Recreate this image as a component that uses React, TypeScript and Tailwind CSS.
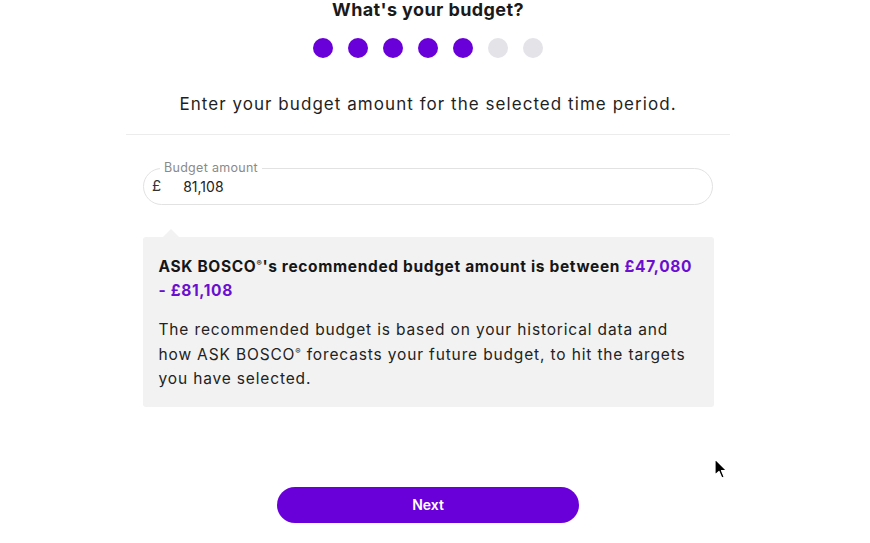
const steps = [true, true, true, true, true, false, false];

function Cursor() {
  return (
    <svg
      className="absolute left-[714px] top-[458px]"
      width="14"
      height="22"
      viewBox="0 0 14 22"
    >
      <path
        d="M1 1 L1 17 L5 13.5 L7.8 20 L10.2 19 L7.5 12.6 L12.5 12.6 Z"
        fill="#000"
        stroke="#fff"
        strokeWidth="1.2"
        strokeLinejoin="round"
      />
    </svg>
  );
}

function Reg() {
  return <span className="align-super text-[8px] leading-none">®</span>;
}

export default function App() {
  return (
    <div className="relative w-[870px] h-[543px] bg-white overflow-hidden font-['Inter',sans-serif] text-[#1a1a1a]">
      <div className="w-[856px] flex flex-col items-center">
        <h1 className="mt-[-1px] text-[18px] leading-[22px] font-bold tracking-[0.4px]">
          What's your budget?
        </h1>

        <div className="mt-[17px] flex gap-[15px]">
          {steps.map((done, i) => (
            <span
              key={i}
              className={
                done
                  ? 'w-[20px] h-[20px] rounded-full bg-[#6a00d9]'
                  : 'w-[20px] h-[20px] rounded-full bg-[#e3e3e8]'
              }
            />
          ))}
        </div>

        <p className="mt-[32px] text-[17px] leading-[28px] tracking-[1.05px] text-[#1f1f1f]">
          Enter your budget amount for the selected time period.
        </p>

        <div className="mt-[16px] w-[604px] h-px bg-[#ececec]" />

        {/* budget input with notched label */}
        <div className="relative mt-[33px] w-[570px] h-[37px] rounded-full border border-[#e2e2e2] flex items-center pl-[8px]">
          <span className="absolute left-[16px] top-[-9px] px-[4px] bg-white text-[12.5px] leading-[16px] tracking-[0.3px] text-[#8a8a8a]">
            Budget amount
          </span>
          <span className="text-[15px] text-[#333]">£</span>
          <span className="ml-[22px] text-[14px] text-[#222]">81,108</span>
        </div>

        {/* recommendation box */}
        <div className="relative mt-[32px] w-[571px] bg-[#f2f2f2] rounded-[3px] px-[16px] pt-[18px] pb-[15px]">
          <span className="absolute left-[20px] top-[-8px] w-0 h-0 border-l-[8px] border-r-[8px] border-b-[8px] border-l-transparent border-r-transparent border-b-[#f2f2f2]" />
          <p className="text-[15.5px] leading-[24px] font-bold tracking-[0.65px] text-[#161616]">
            ASK BOSCO<Reg />'s recommended budget amount is between{' '}
            <span className="text-[#6a0fd0]">£47,080 - £81,108</span>
          </p>
          <p className="mt-[15px] text-[15.5px] leading-[24.5px] tracking-[0.85px] text-[#222]">
            The recommended budget is based on your historical data and how ASK BOSCO
            <Reg /> forecasts your future budget, to hit the targets you have selected.
          </p>
        </div>

        <button className="mt-[80px] w-[302px] h-[36px] rounded-full bg-[#6a00d9] text-white text-[14px] font-semibold">
          Next
        </button>
      </div>
      <Cursor />
    </div>
  );
}
